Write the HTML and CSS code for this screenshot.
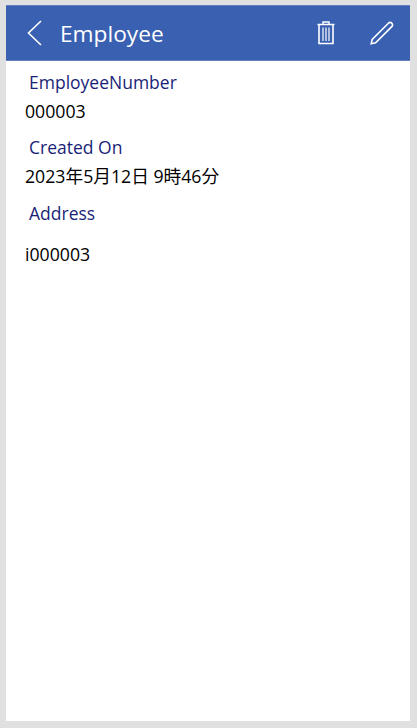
FILE: index.html
```html
<!DOCTYPE html>
<html lang="ja">
<head>
    <meta charset="UTF-8">
    <meta name="viewport" content="width=device-width, initial-scale=1.0">
    <title>Employee</title>
    <link rel="stylesheet" href="styles.css">
</head>
<body>
    <div class="screen">
        <!-- Header -->
        <div class="header">
            <svg class="icon-back" width="18" height="28" viewBox="0 0 18 28">
                <path d="M15 2 L2.5 14 L15 26" fill="none" stroke="#fff" stroke-width="1.6"/>
            </svg>
            <div class="header-title">Employee</div>
            <svg class="icon-trash" width="18" height="24" viewBox="0 0 18 24">
                <path d="M0.5 3.5 H17.5 M6 3.5 V1 H12 V3.5" fill="none" stroke="#fff" stroke-width="1.4"/>
                <path d="M2 3.5 V22.5 H16 V3.5" fill="none" stroke="#fff" stroke-width="1.6"/>
                <path d="M6 6.5 V20 M9 6.5 V20 M12 6.5 V20" fill="none" stroke="#fff" stroke-width="1.2"/>
            </svg>
            <svg class="icon-edit" width="24" height="24" viewBox="0 0 24 24">
                <path d="M1.2 22.8 L2.2 18.4 L18.6 2 Q20.2 0.8 21.8 2.2 Q23.2 3.8 22 5.4 L5.6 21.8 Z" fill="none" stroke="#fff" stroke-width="1.6"/>
            </svg>
        </div>

        <!-- Fields -->
        <div class="content">
            <div class="field-label label-number">EmployeeNumber</div>
            <div class="field-value value-number">000003</div>
            <div class="field-label label-created">Created On</div>
            <div class="field-value value-created">2023年5月12日 9時46分</div>
            <div class="field-label label-address">Address</div>
            <div class="field-value value-address">i000003</div>
        </div>
    </div>
</body>
</html>
```

FILE: styles.css
```css
* {
    margin: 0;
    padding: 0;
    box-sizing: border-box;
}

html, body {
    height: 100%;
}

body {
    font-family: 'Open Sans', 'Noto Sans CJK JP', sans-serif;
    background-color: #e0e0e0;
    padding: 5px 7px 7px 6px;
}

.screen {
    height: 100%;
    background: white;
    display: flex;
    flex-direction: column;
}

.header {
    height: 56px;
    background: #3a60b2;
    border: 1px solid #5f7fc2;
    border-left: none;
    border-right: none;
    color: white;
    display: flex;
    align-items: center;
    padding-left: 20px;
    flex-shrink: 0;
}

.icon-back {
    flex-shrink: 0;
}

.header-title {
    font-size: 22.7px;
    margin-left: 16px;
    flex: 1;
}

.icon-trash {
    margin-right: 35px;
}

.icon-edit {
    margin-right: 16px;
}

.content {
    padding-left: 19px;
}

.field-label {
    font-size: 17.5px;
    line-height: 24px;
    color: #1a1f78;
    margin-left: 4px;
}

.field-value {
    font-size: 17.7px;
    line-height: 24px;
    color: #000;
}

.label-number {
    margin-top: 9px;
}

.value-number {
    margin-top: 5px;
}

.label-created {
    margin-top: 12px;
}

.value-created {
    margin-top: 5px;
}

.label-address {
    margin-top: 13px;
}

.value-address {
    margin-top: 17px;
}
```
